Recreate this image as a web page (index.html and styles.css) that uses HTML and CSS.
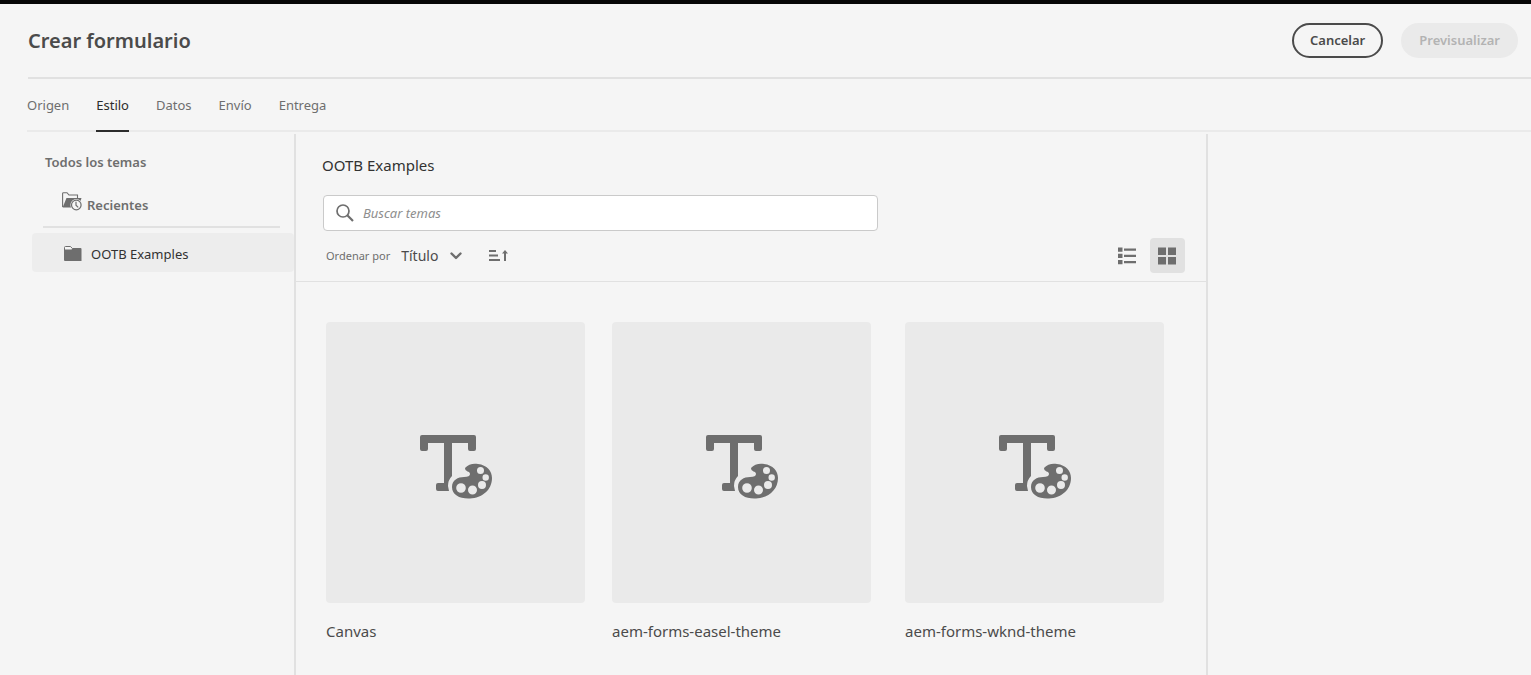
FILE: index.html
```html
<!DOCTYPE html>
<html lang="es">
<head>
<meta charset="utf-8">
<title>Crear formulario</title>
<meta name="viewport" content="width=device-width, initial-scale=1">
<link rel="stylesheet" href="styles.css">
</head>
<body>
<svg class="defs" aria-hidden="true">
  <symbol id="theme" viewBox="0 0 72 64">
    <path d="M2 0H54Q56 0 56 2V14Q56 16 54 16H50Q48 16 48 14V8H32V41Q28 45 28 51L29 56H18Q16 56 16 54V50Q16 48 18 48H24V8H8V14Q8 16 6 16H2Q0 16 0 14V2Q0 0 2 0Z"/>
    <path fill-rule="evenodd" d="M45 33C48 29 54 28 58 29C67 30 72 36 72 43C72 55 62 63 50 63.500C40 64 32 60 32 52C32 45 38 42 44 42C48 42 50 41 50 39C50 36 45 37 45 33ZM57 35.500a3.500 3.500 0 1 0 7 0a3.500 3.500 0 1 0-7 0ZM62.500 42.500a3.200 3.200 0 1 0 6.400 0a3.200 3.200 0 1 0-6.400 0ZM58 50a4 4 0 1 0 8 0a4 4 0 1 0-8 0ZM48 55a4.500 4.500 0 1 0 9 0a4.500 4.500 0 1 0-9 0ZM36.200 53a4.800 4.800 0 1 0 9.600 0a4.800 4.800 0 1 0-9.600 0Z"/>
  </symbol>
</svg>
<header class="header">
  <h1 class="title">Crear formulario</h1>
  <div class="actions">
    <button class="btn btn-outline" type="button">Cancelar</button>
    <button class="btn btn-muted" type="button" disabled>Previsualizar</button>
  </div>
</header>
<nav class="tabs">
  <a class="tab" href="#origen">Origen</a>
  <a class="tab tab-active" href="#estilo" aria-current="page">Estilo</a>
  <a class="tab" href="#datos">Datos</a>
  <a class="tab" href="#envio">Envío</a>
  <a class="tab" href="#entrega">Entrega</a>
</nav>
<div class="workspace">
  <aside class="sidebar">
    <h2 class="side-title">Todos los temas</h2>
    <a class="recent" href="#recientes">
      <svg class="recent-icon" width="20" height="20" viewBox="0 0 20 20" aria-hidden="true">
        <path d="M.6 15V1.600Q.6.700 1.500.700H5L7 3H15.500V6.500" fill="none" stroke="#6e6e6e" stroke-width="1.100"/>
        <path d="M4.500 6H19.500L16.500 15.500H.6Z" fill="#6e6e6e"/>
        <circle cx="14.300" cy="13" r="5.200" fill="#f5f5f5" stroke="#f5f5f5" stroke-width="1.400"/>
        <circle cx="14.300" cy="13" r="4.800" fill="none" stroke="#6e6e6e" stroke-width="1.200"/>
        <path d="M14 9.800V13.200L16.200 15.400" fill="none" stroke="#6e6e6e" stroke-width="1.200"/>
      </svg>
      <span>Recientes</span>
    </a>
    <a class="folder" href="#ootb">
      <svg width="18" height="16" viewBox="0 0 18 16" aria-hidden="true">
        <path d="M.5 4V1.500Q.5.500 1.500.500H6.500L8.500 2.700V4" fill="#f5f5f5" stroke="#6e6e6e"/>
        <path d="M0 3.500H7.500L9 2H16.500Q17.500 2 17.500 3V15H1Q0 15 0 14Z" fill="#6e6e6e"/>
      </svg>
      <span>OOTB Examples</span>
    </a>
  </aside>
  <main class="main">
    <div class="toolbar">
      <h2 class="main-title">OOTB Examples</h2>
      <label class="search">
        <svg width="18" height="18" viewBox="0 0 18 18" fill="none" stroke="#6e6e6e" stroke-width="1.700" aria-hidden="true">
          <circle cx="7" cy="7" r="6"/><path d="M11.300 11.300L17 17" stroke-width="2.200"/>
        </svg>
        <input class="search-input" type="search" placeholder="Buscar temas" aria-label="Buscar temas">
      </label>
      <div class="controls">
        <label class="sort-label" for="sort">Ordenar por</label>
        <div class="sort">
          <select class="sort-select" id="sort"><option>Título</option></select>
          <svg class="chevron" width="12" height="8" viewBox="0 0 12 8" fill="none" stroke="#6e6e6e" stroke-width="2.400" stroke-linecap="round" stroke-linejoin="round" aria-hidden="true"><path d="M1.500 1.500L6 6L10.500 1.500"/></svg>
        </div>
        <button class="icon-btn order" type="button" aria-label="Orden ascendente">
          <svg width="20" height="12" viewBox="0 0 20 12" fill="#6e6e6e" aria-hidden="true">
            <path d="M0 0H7V2H0ZM0 4.500H9V6.500H0ZM0 9H11V11H0ZM16 0L19 3.500H17V11H15V3.500H13Z"/>
          </svg>
        </button>
        <div class="views">
          <button class="icon-btn view" type="button" aria-label="Vista de lista">
            <svg width="18" height="18" viewBox="0 0 18 18" fill="#6e6e6e" aria-hidden="true">
              <path d="M0 .500H4.500V4.800H0ZM0 6.800H4.500V11H0ZM0 13H4.500V17.300H0ZM6 1.500H18V3.700H6ZM6 7.800H18V10H6ZM6 14H18V16.200H6Z"/>
            </svg>
          </button>
          <button class="icon-btn view view-active" type="button" aria-label="Vista de tarjetas" aria-pressed="true">
            <svg width="18" height="18" viewBox="0 0 18 18" fill="#6e6e6e" aria-hidden="true">
              <path d="M0 .500H8V8H0ZM10 .500H18V8H10ZM0 10H8V17.500H0ZM10 10H18V17.500H10Z"/>
            </svg>
          </button>
        </div>
      </div>
    </div>
    <div class="cards">
      <article class="card">
        <div class="thumb"><svg class="theme-icon" aria-hidden="true"><use href="#theme"/></svg></div>
        <h3 class="card-name">Canvas</h3>
      </article>
      <article class="card">
        <div class="thumb"><svg class="theme-icon" aria-hidden="true"><use href="#theme"/></svg></div>
        <h3 class="card-name">aem-forms-easel-theme</h3>
      </article>
      <article class="card">
        <div class="thumb"><svg class="theme-icon" aria-hidden="true"><use href="#theme"/></svg></div>
        <h3 class="card-name">aem-forms-wknd-theme</h3>
      </article>
    </div>
  </main>
  <aside class="details" aria-label="Detalles"></aside>
</div>
</body>
</html>
```
FILE: styles.css
```css
* { box-sizing: border-box; }
body {
  margin: 0;
  min-height: 100vh;
  display: flex;
  flex-direction: column;
  border-top: 4px solid #060606;
  background: #f5f5f5;
  color: #4b4b4b;
  font-family: "Noto Sans", sans-serif;
  font-size: 13px;
  line-height: 20px;
}
h1, h2, h3 { margin: 0; }
a { color: inherit; text-decoration: none; }
svg { display: block; flex: none; }
button, input, select { font: inherit; }
.defs { position: absolute; width: 0; height: 0; }

.header {
  display: flex;
  justify-content: space-between;
  align-items: center;
  height: 75px;
  margin-left: 28px;
  padding-right: 13px;
  border-bottom: 2px solid #e1e1e1;
}
.title { font-size: 20px; font-weight: 600; line-height: 28px; }
.actions { display: flex; gap: 18px; }
.btn {
  height: 35px;
  padding: 0 16px 2px;
  border: 2px solid #4b4b4b;
  border-radius: 18px;
  background: transparent;
  color: #4b4b4b;
  font-weight: 600;
}
.btn-muted { border-color: #eaeaea; background: #eaeaea; color: #b3b3b3; }

.tabs {
  display: flex;
  gap: 27px;
  height: 53px;
  margin-left: 27px;
  color: #6e6e6e;
  border-bottom: 2px solid #eaeaea;
}
.tab { height: 53px; padding-top: 16px; }
.tab-active { border-bottom: 2px solid #2c2c2c; color: #2c2c2c; }

.workspace { flex: 1; display: flex; margin-top: 2px; }
.sidebar {
  width: 296px;
  padding: 18px 0 0 32px;
  border-right: 2px solid #e1e1e1;
}
.side-title { padding-left: 13px; font-size: 13px; font-weight: 600; color: #6e6e6e; }
.recent {
  display: flex;
  align-items: flex-end;
  gap: 5px;
  margin: 13px 14px 5px 11px;
  padding: 7px 0 11px 19px;
  border-bottom: 2px solid #e1e1e1;
  color: #6e6e6e;
  font-weight: 600;
}
.recent-icon { margin-bottom: 3px; }
.folder {
  display: flex;
  align-items: center;
  gap: 9px;
  height: 39px;
  padding: 2px 0 0 32px;
  border-radius: 4px;
  background: #ededed;
  color: #323232;
}

.main { flex: 1; min-width: 0; }
.toolbar { padding: 19px 21px 8px 26px; border-bottom: 1px solid #e1e1e1; }
.main-title { font-size: 15px; font-weight: 400; line-height: 24px; color: #323232; }
.search {
  display: flex;
  align-items: center;
  gap: 9px;
  max-width: 555px;
  height: 36px;
  margin: 18px 0 7px 1px;
  padding: 0 12px;
  border: 1px solid #cacaca;
  border-radius: 4px;
  background: #fff;
}
.search-input {
  flex: 1;
  min-width: 0;
  padding: 0;
  border: 0;
  outline: 0;
  background: none;
}
.search-input::placeholder { color: #8e8e8e; font-style: italic; opacity: 1; }
.controls { display: flex; align-items: center; height: 35px; padding-left: 4px; }
.sort-label { padding-top: 1px; font-size: 11px; color: #6e6e6e; }
.sort { position: relative; margin-left: 11px; }
.sort-select {
  display: block;
  width: 61px;
  padding: 0;
  border: 0;
  appearance: none;
  background: transparent;
  color: #4b4b4b;
  font-size: 14px;
}
.chevron { position: absolute; right: 0; top: 6px; pointer-events: none; }
.icon-btn {
  display: flex;
  align-items: center;
  justify-content: center;
  padding: 0;
  border: 0;
  border-radius: 4px;
  background: transparent;
}
.order { margin-left: 27px; }
.views { display: flex; gap: 5px; margin-left: auto; }
.view { width: 35px; height: 35px; padding-right: 1px; }
.view-active { background: #e1e1e1; }

.cards { display: grid; grid-template-columns: 286fr 293fr 301fr; padding: 40px 0 0 30px; }
.thumb {
  display: flex;
  align-items: center;
  justify-content: center;
  width: 259px;
  height: 281px;
  padding-top: 8px;
  border-radius: 4px;
  background: #eaeaea;
}
.theme-icon { width: 72px; height: 64px; fill: #6e6e6e; }
.card-name { margin-top: 16px; font-size: 15px; font-weight: 400; line-height: 24px; }

.details { width: 325px; border-left: 2px solid #e1e1e1; }
```
